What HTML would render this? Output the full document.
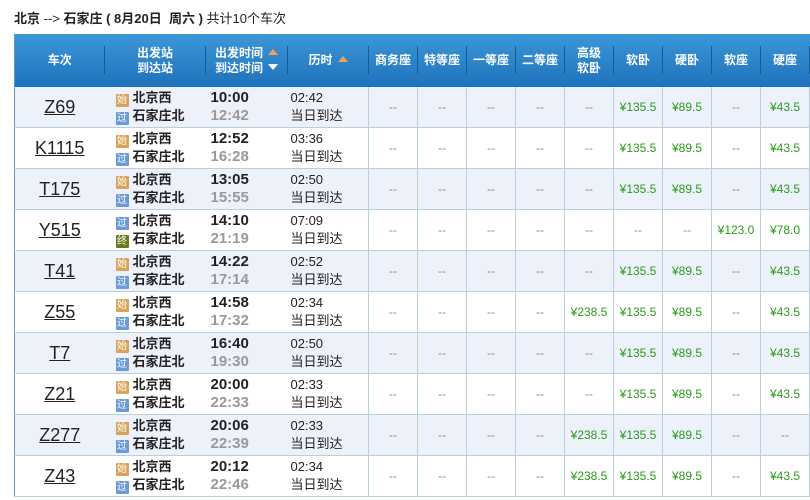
<!DOCTYPE html>
<html><head><meta charset="utf-8"><style>
body{margin:0;width:810px;height:500px;overflow:hidden;background:#fff;font-family:"Liberation Sans","Noto Sans CJK SC",sans-serif;position:relative}
.title{position:absolute;left:14px;top:8px;font-size:13px;font-weight:bold;color:#222;white-space:nowrap}
.title span{font-weight:normal}
table{position:absolute;left:14px;top:34px;border-collapse:collapse;table-layout:fixed;width:843px;border-left:1px solid #5d97cc}
th{height:53px;padding:0;color:#fff;font-size:12px;font-weight:bold;background:linear-gradient(#3c97d8,#1e72bb);position:relative;line-height:15px;text-align:center}
th.s::after{content:"";position:absolute;right:0;top:12px;height:28px;border-right:1px solid #1a5a94}
td{height:40px;padding:0;border-bottom:1px solid #b8cfdf;text-align:center;font-size:12px;color:#888}
tr.o td{background:#edf1fa}
td.p{border-left:1px solid #b8cfdf}
td.g{color:#2a9a1a}
.tn{font-size:18px;color:#222;text-decoration:underline}
.st{text-align:left;font-size:13px;font-weight:bold;color:#222;line-height:18px;padding-left:11px}
.ic{display:inline-block;width:13px;height:13px;font-size:10px;line-height:13px;text-align:center;color:#fff;vertical-align:-1px;margin-right:4px;border-radius:1px;font-weight:normal}
.a{background:#d9a45a}.b{background:#6b9ad8}.c{background:#6a7a1a}
.tm{text-align:left;font-size:15px;font-weight:bold;line-height:18px;padding-left:5px;color:#222}
.tm i{font-style:normal;color:#999}
.du{text-align:left;font-size:13px;color:#222;line-height:18px;padding-left:3px}
.up::after{content:"";display:inline-block;margin-left:5px;border:5px solid transparent;border-top:0;border-bottom:6px solid #f0a050;vertical-align:2px}
.dn::after{content:"";display:inline-block;margin-left:5px;border:5px solid transparent;border-bottom:0;border-top:6px solid #fff;vertical-align:2px}
</style></head><body>
<div class="title">北京 <span>--&gt;</span> 石家庄 ( 8月20日&nbsp; 周六 ) <span>共计10个车次</span></div>
<table>
<colgroup><col style="width:90px"><col style="width:101px"><col style="width:82px"><col style="width:81px"><col span="10" style="width:49px"></colgroup>
<tr><th class="s">车次</th><th class="s">出发站<br>到达站</th><th class="s"><span class="up">出发时间</span><br><span class="dn">到达时间</span></th><th class="s"><span class="up">历时</span></th><th class="s">商务座</th><th class="s">特等座</th><th class="s">一等座</th><th class="s">二等座</th><th class="s">高级<br>软卧</th><th class="s">软卧</th><th class="s">硬卧</th><th class="s">软座</th><th class="s">硬座</th><th></th></tr>
<tr class="o"><td><span class="tn">Z69</span></td><td class="st"><span class="ic a">始</span>北京西<br><span class="ic b">过</span>石家庄北</td><td class="tm">10:00<br><i>12:42</i></td><td class="du">02:42<br>当日到达</td><td class="p">--</td><td class="p">--</td><td class="p">--</td><td class="p">--</td><td class="p">--</td><td class="p g">¥135.5</td><td class="p g">¥89.5</td><td class="p">--</td><td class="p g">¥43.5</td><td class="p"></td></tr>
<tr><td><span class="tn">K1115</span></td><td class="st"><span class="ic a">始</span>北京西<br><span class="ic b">过</span>石家庄北</td><td class="tm">12:52<br><i>16:28</i></td><td class="du">03:36<br>当日到达</td><td class="p">--</td><td class="p">--</td><td class="p">--</td><td class="p">--</td><td class="p">--</td><td class="p g">¥135.5</td><td class="p g">¥89.5</td><td class="p">--</td><td class="p g">¥43.5</td><td class="p"></td></tr>
<tr class="o"><td><span class="tn">T175</span></td><td class="st"><span class="ic a">始</span>北京西<br><span class="ic b">过</span>石家庄北</td><td class="tm">13:05<br><i>15:55</i></td><td class="du">02:50<br>当日到达</td><td class="p">--</td><td class="p">--</td><td class="p">--</td><td class="p">--</td><td class="p">--</td><td class="p g">¥135.5</td><td class="p g">¥89.5</td><td class="p">--</td><td class="p g">¥43.5</td><td class="p"></td></tr>
<tr><td><span class="tn">Y515</span></td><td class="st"><span class="ic b">过</span>北京西<br><span class="ic c">终</span>石家庄北</td><td class="tm">14:10<br><i>21:19</i></td><td class="du">07:09<br>当日到达</td><td class="p">--</td><td class="p">--</td><td class="p">--</td><td class="p">--</td><td class="p">--</td><td class="p">--</td><td class="p">--</td><td class="p g">¥123.0</td><td class="p g">¥78.0</td><td class="p"></td></tr>
<tr class="o"><td><span class="tn">T41</span></td><td class="st"><span class="ic a">始</span>北京西<br><span class="ic b">过</span>石家庄北</td><td class="tm">14:22<br><i>17:14</i></td><td class="du">02:52<br>当日到达</td><td class="p">--</td><td class="p">--</td><td class="p">--</td><td class="p">--</td><td class="p">--</td><td class="p g">¥135.5</td><td class="p g">¥89.5</td><td class="p">--</td><td class="p g">¥43.5</td><td class="p"></td></tr>
<tr><td><span class="tn">Z55</span></td><td class="st"><span class="ic a">始</span>北京西<br><span class="ic b">过</span>石家庄北</td><td class="tm">14:58<br><i>17:32</i></td><td class="du">02:34<br>当日到达</td><td class="p">--</td><td class="p">--</td><td class="p">--</td><td class="p">--</td><td class="p g">¥238.5</td><td class="p g">¥135.5</td><td class="p g">¥89.5</td><td class="p">--</td><td class="p g">¥43.5</td><td class="p"></td></tr>
<tr class="o"><td><span class="tn">T7</span></td><td class="st"><span class="ic a">始</span>北京西<br><span class="ic b">过</span>石家庄北</td><td class="tm">16:40<br><i>19:30</i></td><td class="du">02:50<br>当日到达</td><td class="p">--</td><td class="p">--</td><td class="p">--</td><td class="p">--</td><td class="p">--</td><td class="p g">¥135.5</td><td class="p g">¥89.5</td><td class="p">--</td><td class="p g">¥43.5</td><td class="p"></td></tr>
<tr><td><span class="tn">Z21</span></td><td class="st"><span class="ic a">始</span>北京西<br><span class="ic b">过</span>石家庄北</td><td class="tm">20:00<br><i>22:33</i></td><td class="du">02:33<br>当日到达</td><td class="p">--</td><td class="p">--</td><td class="p">--</td><td class="p">--</td><td class="p">--</td><td class="p g">¥135.5</td><td class="p g">¥89.5</td><td class="p">--</td><td class="p g">¥43.5</td><td class="p"></td></tr>
<tr class="o"><td><span class="tn">Z277</span></td><td class="st"><span class="ic a">始</span>北京西<br><span class="ic b">过</span>石家庄北</td><td class="tm">20:06<br><i>22:39</i></td><td class="du">02:33<br>当日到达</td><td class="p">--</td><td class="p">--</td><td class="p">--</td><td class="p">--</td><td class="p g">¥238.5</td><td class="p g">¥135.5</td><td class="p g">¥89.5</td><td class="p">--</td><td class="p">--</td><td class="p"></td></tr>
<tr><td><span class="tn">Z43</span></td><td class="st"><span class="ic a">始</span>北京西<br><span class="ic b">过</span>石家庄北</td><td class="tm">20:12<br><i>22:46</i></td><td class="du">02:34<br>当日到达</td><td class="p">--</td><td class="p">--</td><td class="p">--</td><td class="p">--</td><td class="p g">¥238.5</td><td class="p g">¥135.5</td><td class="p g">¥89.5</td><td class="p">--</td><td class="p g">¥43.5</td><td class="p"></td></tr>
</table>
</body></html>
